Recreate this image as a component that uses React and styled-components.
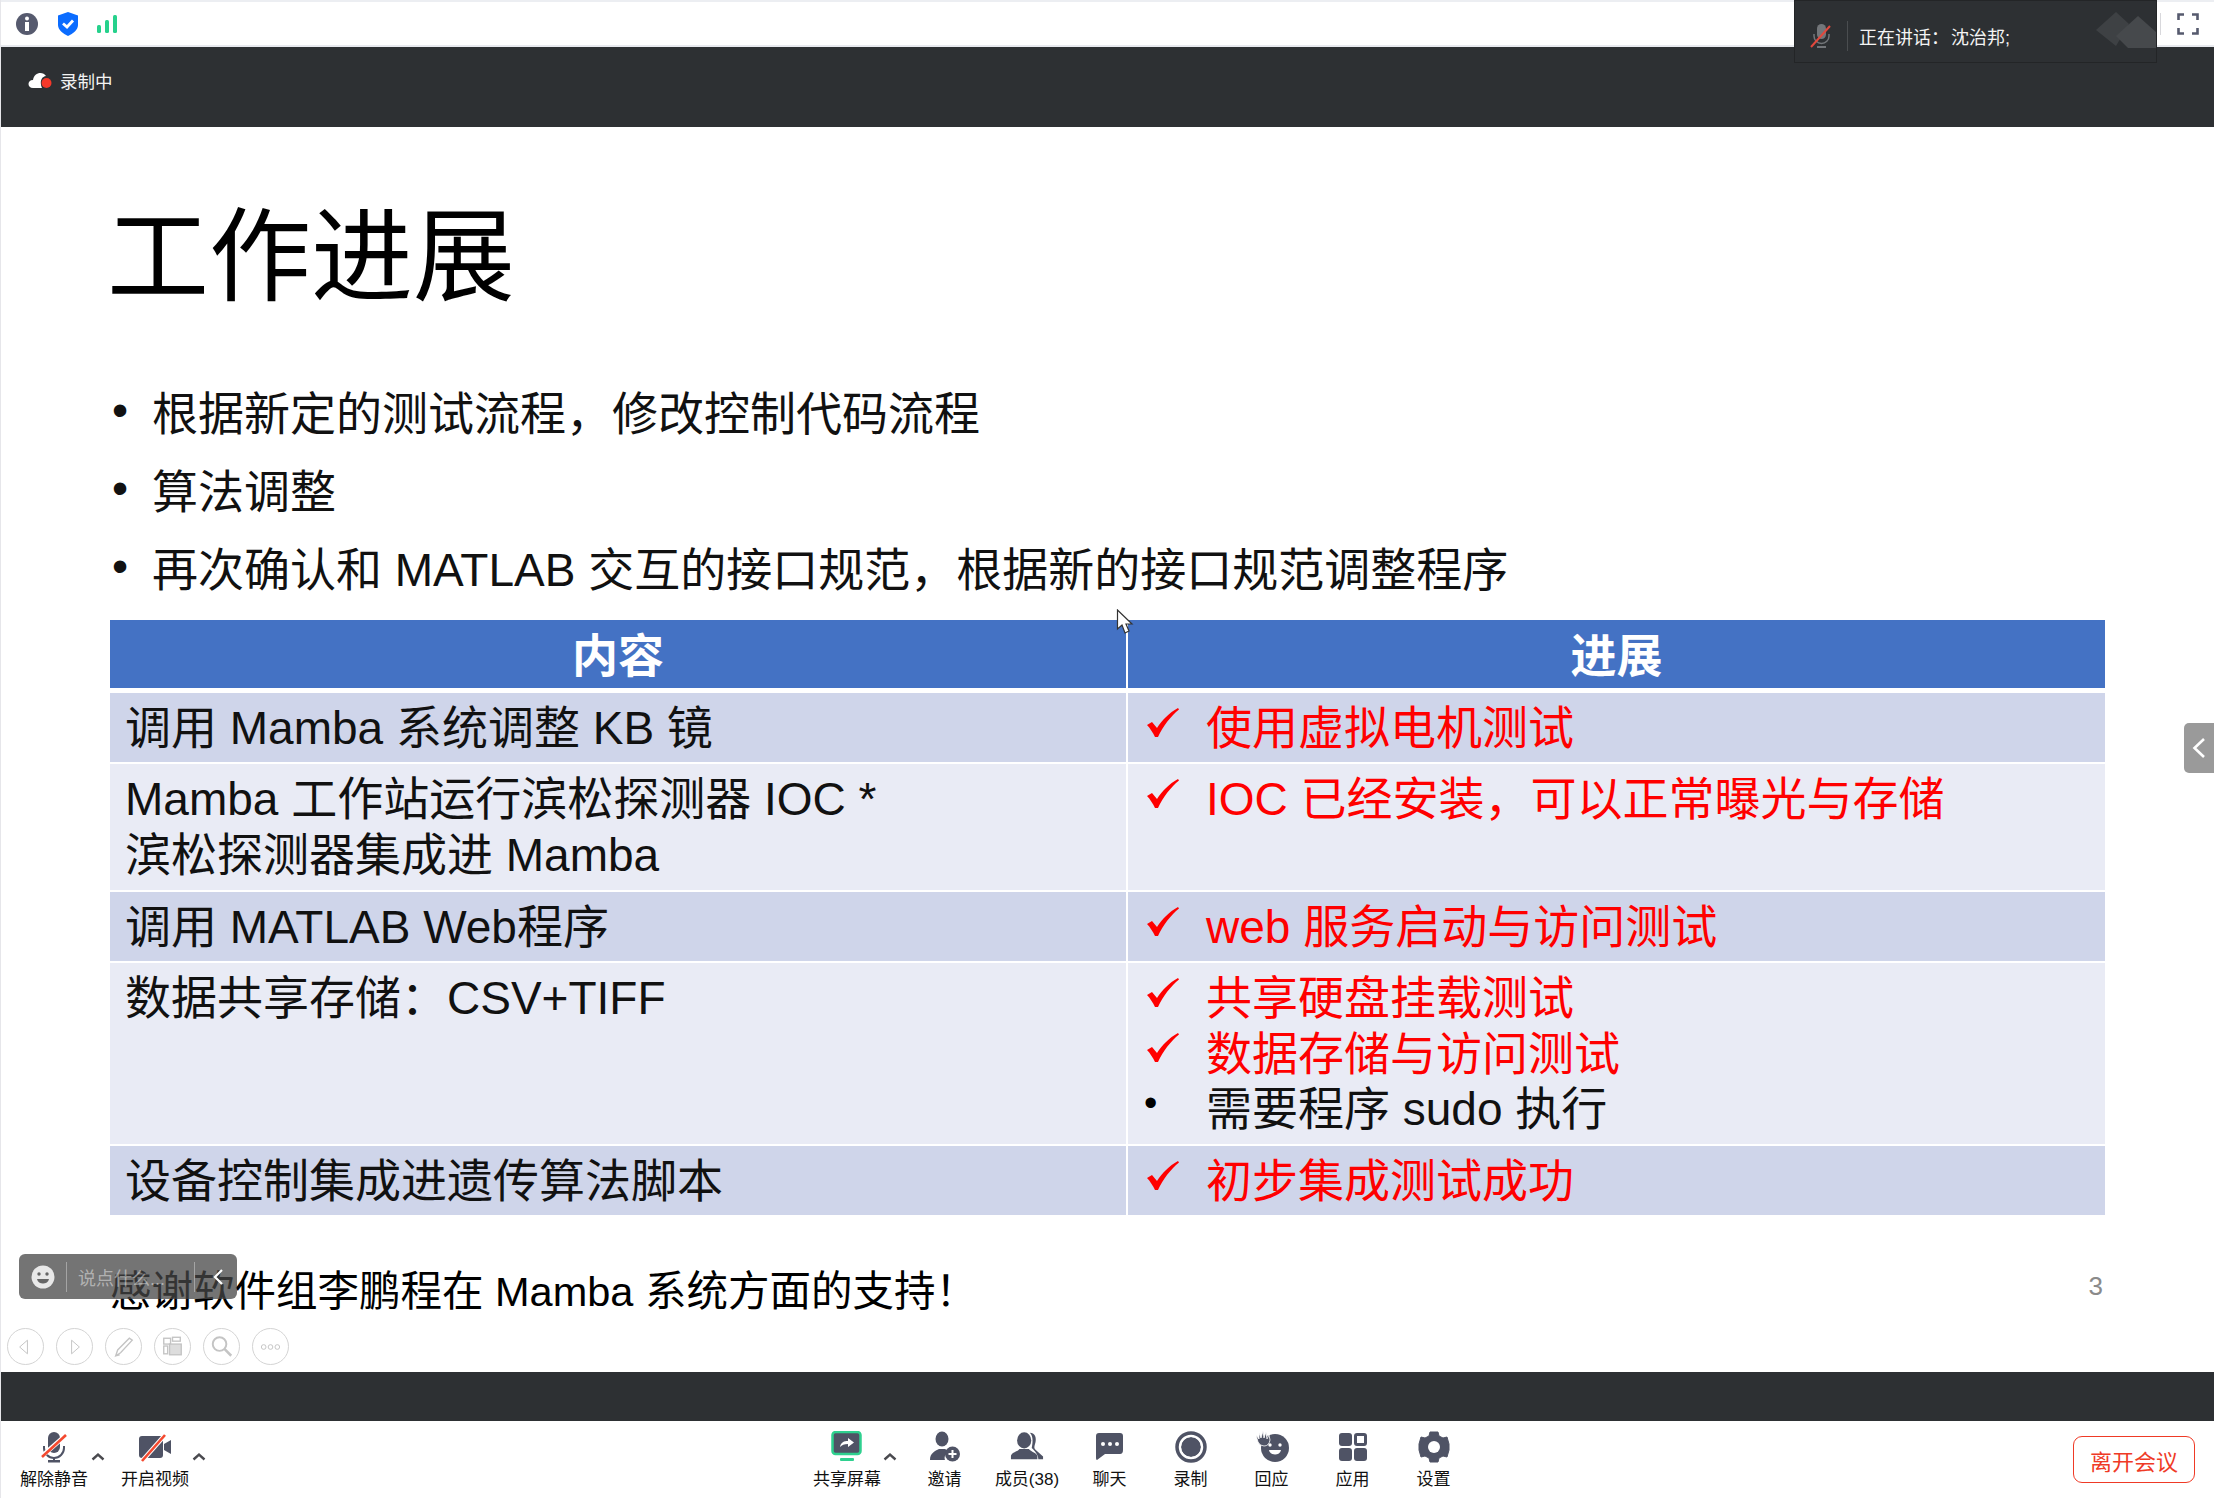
import React from 'react';
import styled, { createGlobalStyle } from 'styled-components';

const Global = createGlobalStyle`
  html, body { margin: 0; padding: 0; background: #fff; }
  body { font-family: "Liberation Sans", "Noto Sans CJK SC", sans-serif; }
`;
const Page = styled.div`
  position: relative; width: 2214px; height: 1498px; overflow: hidden;
  display: flex; flex-direction: column; background: #fff; border-left: 1px solid #e6e6ea; box-sizing: border-box;
`;
const TopBar = styled.div`
  height: 47px; box-sizing: border-box; flex: none; display: flex; align-items: center; gap: 18px; padding: 0 0 0 14px;
  border-top: 2px solid #eceef2; border-bottom: 2px solid #e8eaef; background: #fff;
`;
const FullscreenBox = styled.div`
  margin-left: auto; display: flex; align-items: center; padding-left: 16px; margin-right: 15px; height: 22px;
  border-left: 1px solid #d8d8dc;
`;
const RecBar = styled.div`
  height: 80px; flex: none; background: #2d3033; display: flex; align-items: center; padding-left: 27px; gap: 7px;
  color: #f2f2f2; font-size: 17.5px; padding-bottom: 14px; box-sizing: border-box; 
`;
const Talker = styled.div`
  position: absolute; left: 1793px; top: 0; width: 363px; height: 63px; box-sizing: border-box; background: #2d3033;
  border: 1px solid #232527; border-top: none; box-shadow: inset 0 10px 0 -9px #232527; display: flex; align-items: center;
  padding: 10px 0 0 15px; color: #f4f4f4; font-size: 18px; overflow: hidden;
`;
const TalkerSep = styled.div`width: 1px; height: 30px; background: #4a4d50; margin: 0 11px 0 15px;`;
const TalkerName = styled.span`margin-left: 2px;`;
const TalkerLogo = styled.svg`position: absolute; right: 0; top: 12px;`;

const Slide = styled.main`
  flex: none; height: 1245px; box-sizing: border-box; padding: 71px 109px 0 109px; background: #fff; color: #000;
  display: flex; flex-direction: column;
`;
const Title = styled.h1`margin: 0 0 0 -3px; font-size: 102px; line-height: 120px; font-weight: 400; height: 120px;`;
const Bullets = styled.ul`margin: 53px 0 15px; padding: 0; list-style: none;`;
const BulletItem = styled.li`
  height: 78px; display: flex; align-items: center; font-size: 46px; color: #111;
  &::before { content: "•"; width: 42px; padding-left: 2px; box-sizing: border-box; font-family: "Liberation Sans"; }
`;
const Table = styled.div`display: grid; grid-template-columns: 1016px 1fr; column-gap: 2px; font-size: 46px; line-height: 55.5px; color: #111;`;
const Head = styled.div`
  background: #4472c4; color: #fff; font-weight: 700; text-align: center; height: 68px; line-height: 72px; margin-bottom: 5px;
`;
const Cell = styled.div`
  background: ${p => (p.$dark ? '#cfd5ea' : '#e9ebf5')}; height: ${p => p.$h}px; margin-bottom: 2px; box-sizing: border-box;
  padding: 8px 0 0 ${p => (p.$right ? 19 : 15)}px;
`;
const Line = styled.div`display: flex; align-items: center; color: ${p => (p.$red ? '#ff0000' : '#111')};`;
const Mark = styled.span`
  width: ${p => (p.$dot ? 62 : 59)}px; margin-left: ${p => (p.$dot ? -3 : 0)}px; flex: none; display: flex; align-items: center; height: 55px;
  font-size: 38px; color: #000; box-sizing: border-box; position: relative; top: -6px;
`;
const Footer = styled.div`display: flex; justify-content: space-between; align-items: center; margin-top: 48px; font-size: 41.5px; line-height: 54px;`;
const PageNo = styled.span`font-size: 26px; color: #8a8a8a; margin: -12px 2px 0 0;`;

const Band = styled.div`height: 49px; flex: none; background: #2d3033;`;
const Toolbar = styled.footer`flex: 1; display: flex; align-items: flex-start; padding-left: 15px; background: #fff;`;
const ToolGroup = styled.div`display: flex; margin-left: ${p => p.$ml || 0}px;`;
const Tool = styled.div`
  width: ${p => p.$w}px; display: flex; flex-direction: column; align-items: center; padding-top: 9px; color: #111; font-size: 17px; line-height: 22px;
  white-space: nowrap;
`;
const ToolIcon = styled.div`height: 34px; width: 34px; display: flex; align-items: center; justify-content: center; margin-bottom: 5px;`;
const Caret = styled.div`width: ${p => p.$w}px; padding-top: 26px; flex: none; margin-left: ${p => p.$ml || 0}px;`;
const Leave = styled.div`
  margin: 15px 19px 0 auto; width: 122px; height: 47px; box-sizing: border-box; border: 1.5px solid #ef3a26; border-radius: 9px; color: #ef3a26;
  font-size: 22px; display: flex; align-items: center; justify-content: center;
`;

const Chat = styled.div`
  position: absolute; left: 18px; top: 1254px; width: 218px; height: 45px; border-radius: 6px; background: rgba(70,70,70,.75);
  display: flex; align-items: center; padding-left: 12px; box-sizing: border-box; color: rgba(255,255,255,.45); font-size: 18px;
`;
const ChatSep = styled.div`width: 1px; height: 30px; background: rgba(255,255,255,.35); flex: none; margin: ${p => p.$m};`;
const ChatHint = styled.span`white-space: nowrap; width: 116px; overflow: hidden;`;
const ChatChevron = styled.svg`margin-left: 16px;`;
const NavRow = styled.div`position: absolute; left: 6px; top: 1328px; display: flex; gap: 12px;`;
const NavBtn = styled.div`
  width: 37px; height: 37px; border-radius: 50%; box-sizing: border-box; border: 1px solid #d4d4d4; display: flex; align-items: center; justify-content: center;
`;
const Cursor = styled.svg`position: absolute; left: 1115px; top: 609px;`;
const SideTab = styled.div`
  position: absolute; right: 0; top: 723px; width: 30px; height: 50px; background: #9a9a9a; border-radius: 5px 0 0 5px;
  display: flex; align-items: center; justify-content: center;
`;

const G = '#4f5365';
const COMMA = '\uFF0C';
const COLON = '\uFF1A';
const BANG = '\uFF01';
const Check = () => (
  <svg width="32" height="30" viewBox="0 0 32 30"><path fill="#f00" d="M0 17 L5 14 L10 20 C15 12 22 5 31 0 L32 1.500 C24 8 16 18 11 29 L8 29 C6 25 3 20 0 17Z" /></svg>
);
const TickLine = ({ children }) => (<Line $red><Mark><Check /></Mark>{children}</Line>);
const UpCaret = () => (<svg width="14" height="9" viewBox="0 0 14 9"><path d="M1.500 7.500 L7 2.500 L12.500 7.500" fill="none" stroke="#4a4a4f" strokeWidth="2.400" /></svg>);

const Icons = {
  mic: (<svg width="32" height="32" viewBox="0 0 32 32"><rect x="10" y="1" width="12" height="21" rx="6" fill={G} /><path d="M6 15v2a10 10 0 0 0 20 0v-2" fill="none" stroke={G} strokeWidth="2" /><rect x="15" y="26" width="2" height="4" fill={G} /><rect x="10" y="29" width="12" height="2.500" fill={G} /><path d="M3 26 L28 4" stroke="#fff" strokeWidth="4.500" /><path d="M4 26 L28 4" stroke="#f4492f" strokeWidth="2.600" /></svg>),
  video: (<svg width="34" height="32" viewBox="0 0 34 32"><rect x="1" y="5" width="24" height="22" rx="3" fill={G} /><path d="M26 13 L33 9 V23 L26 19Z" fill={G} /><path d="M4 30 L27 4" stroke="#fff" strokeWidth="4.500" /><path d="M4 30 L27 4" stroke="#f4492f" strokeWidth="2.600" /></svg>),
  share: (<svg width="32" height="32" viewBox="0 0 32 32"><rect x="1.500" y="1" width="28" height="22" rx="3" fill={G} stroke="#2fd08f" strokeWidth="2.500" /><rect x="9" y="27" width="14" height="3" rx="1" fill="#2fd08f" /><path d="M9 16 C10 11 13 10 17 10 V7 L23 11.500 L17 16 V13 C13 13 11 14 9 16Z" fill="#fff" /></svg>),
  invite: (<svg width="32" height="32" viewBox="0 0 32 32"><ellipse cx="13" cy="8" rx="6.500" ry="7.500" fill={G} /><path d="M1 29 C1 22 6 20 10 18 H16 C18 19 19 20 20 20 C16 23 15 26 16 29Z" fill={G} /><circle cx="23.500" cy="23" r="7.500" fill={G} /><path d="M19.500 23h8M23.500 19v8" stroke="#fff" strokeWidth="2" /></svg>),
  people: (<svg width="36" height="32" viewBox="0 0 36 32"><path d="M21 1 C27 1 28 7 27 11 C26 15 25 17 27 19 L35 26 V29 H30 C30 24 26 20 23 17 C24 12 25 5 21 1Z" fill={G} /><ellipse cx="15" cy="9" rx="7.500" ry="8.500" fill={G} /><path d="M1 29 V26 C1 22 8 21 10 18 H20 C22 21 29 22 29 26 V29Z" fill={G} /></svg>),
  chat: (<svg width="30" height="30" viewBox="0 0 30 30"><path d="M4 1 H25 Q28 1 28 4 V18 Q28 22 25 22 H10 L2 28 Q1 28 1 26 V4 Q1 1 4 1Z" fill={G} /><circle cx="8" cy="12" r="2" fill="#fff" /><circle cx="15" cy="12" r="2" fill="#fff" /><circle cx="22" cy="12" r="2" fill="#fff" /></svg>),
  rec: (<svg width="32" height="32" viewBox="0 0 32 32"><circle cx="16" cy="16" r="14" fill="none" stroke={G} strokeWidth="3.500" /><circle cx="16" cy="16" r="10" fill={G} /><circle cx="16" cy="16" r="10.500" fill="none" stroke="#fff" strokeWidth="1" /></svg>),
  react: (<svg width="34" height="32" viewBox="0 0 34 32"><circle cx="20" cy="17" r="14" fill={G} /><path d="M1 4 L3 11 Q5 15 9 15 Q14 15 15 9 L14 4 L12 8 L11 1 L9 7 L8 0 L6 7 L4 2 L4 8Z" fill={G} stroke="#fff" strokeWidth=".8" /><circle cx="15" cy="14" r="1.700" fill="#fff" /><circle cx="25" cy="14" r="1.700" fill="#fff" /><path d="M14 19 H26 C25 25 15 25 14 19Z" fill="#fff" /></svg>),
  apps: (<svg width="30" height="30" viewBox="0 0 30 30"><rect x="1" y="1" width="13" height="13" rx="3" fill={G} /><rect x="1" y="16" width="13" height="13" rx="3" fill={G} /><rect x="16" y="16" width="13" height="13" rx="3" fill={G} /><rect x="17.500" y="2.500" width="10" height="10" rx="1.500" fill="#fff" stroke={G} strokeWidth="3" /></svg>),
  gear: (<svg width="32" height="32" viewBox="0 0 32 32"><path fill={G} d="M12 1 H20 L21 5 L25 7 L29 6 L31 13 V19 L29 26 L25 25 L21 27 L20 31 H12 L11 27 L7 25 L3 26 L1 19 V13 L3 6 L7 7 L11 5Z" strokeLinejoin="round" stroke={G} strokeWidth="1" /><circle cx="16" cy="16" r="6" fill="#fff" /></svg>),
};

const NavGlyphs = [
  <path d="M20 11 L12 18 L20 25Z" fill="none" stroke="#c4c4c4" />,
  <path d="M15 11 L23 18 L15 25Z" fill="none" stroke="#c4c4c4" />,
  <path d="M10 27 L12 21 L24 9 L27 11 L15 24Z M10 27 L14 26" fill="none" stroke="#c4c4c4" strokeWidth="1.400" />,
  <g fill="none" stroke="#c4c4c4" strokeWidth="1.400"><rect x="9" y="9" width="7" height="6" /><rect x="18" y="8" width="8" height="4" /><rect x="9" y="17" width="4" height="8" /><rect x="15" y="15" width="12" height="11" fill="#ddd" /></g>,
  <g fill="none" stroke="#c4c4c4" strokeWidth="2"><circle cx="16" cy="15" r="7" /><path d="M21 20 L28 27" strokeWidth="2.600" /></g>,
  <g fill="none" stroke="#c4c4c4"><circle cx="11" cy="18" r="2.400" /><circle cx="18" cy="18" r="2.400" /><circle cx="25" cy="18" r="2.400" /></g>,
];

export default function App() {
  return (
    <Page>
      <Global />
      <TopBar>
        <svg width="24" height="24" viewBox="0 0 24 24"><circle cx="12" cy="12" r="11" fill="#565a6e" /><circle cx="12" cy="6.500" r="2" fill="#fff" /><rect x="10" y="10" width="4" height="9" fill="#fff" /></svg>
        <svg width="22" height="24" viewBox="0 0 22 24"><path d="M11 0 L21 3.500 V13 C21 18 16 21.500 11 24 C6 21.500 1 18 1 13 V3.500Z" fill="#0b6cff" /><path d="M6 11.500 L10 15 L16 8.500" fill="none" stroke="#fff" strokeWidth="2.800" /></svg>
        <svg width="20" height="20" viewBox="0 0 20 20"><rect x="0" y="11" width="4" height="8" rx="1.500" fill="#26d18c" /><rect x="8" y="6" width="4" height="13" rx="1.500" fill="#26d18c" /><rect x="16" y="1" width="4" height="18" rx="1.500" fill="#26d18c" /></svg>
        <FullscreenBox>
          <svg width="22" height="22" viewBox="0 0 22 22"><path d="M1.500 7 V1.500 H7 M15 1.500 H20.500 V7 M20.500 15 V20.500 H15 M7 20.500 H1.500 V15" fill="none" stroke="#565a6e" strokeWidth="2.600" /></svg>
        </FullscreenBox>
      </TopBar>
      <RecBar>
        <svg width="25" height="20" viewBox="0 0 25 20"><path d="M5 18 C-1 18 -1 10 5 10 C6 2 15 1 18 6 C12 7 12 14 14 18Z" fill="#fff" /><circle cx="18.500" cy="13" r="5" fill="#f5382a" /></svg>
        录制中
      </RecBar>
      <Talker>
        <svg width="22" height="26" viewBox="0 0 22 26"><rect x="7" y="1" width="9" height="15" rx="4.500" fill="#73767a" /><path d="M4 11 v2 a7.500 7.500 0 0 0 15 0 v-2" fill="none" stroke="#73767a" strokeWidth="1.500" /><rect x="7" y="23" width="9" height="2" fill="#73767a" /><path d="M1 24 L20 3" stroke="#e2483d" strokeWidth="2" /></svg>
        <TalkerSep />
        {'正在讲话' + COLON}<TalkerName>沈治邦;</TalkerName>
        <TalkerLogo width="60" height="36" viewBox="0 0 60 36"><path d="M0 18 L20 0 L33 12 L20 34 Z" fill="#3e4144" /><path d="M20 24 L42 4 L60 20 V36 H32Z" fill="#46494c" /></TalkerLogo>
      </Talker>
      <Slide>
        <Title>工作进展</Title>
        <Bullets>
          <BulletItem>{'根据新定的测试流程' + COMMA + '修改控制代码流程'}</BulletItem>
          <BulletItem>算法调整</BulletItem>
          <BulletItem>{'再次确认和 MATLAB 交互的接口规范' + COMMA + '根据新的接口规范调整程序'}</BulletItem>
        </Bullets>
        <Table>
          <Head>内容</Head>
          <Head>进展</Head>
          <Cell $dark $h={69}>调用 Mamba 系统调整 KB 镜</Cell>
          <Cell $dark $right $h={69}><TickLine>使用虚拟电机测试</TickLine></Cell>
          <Cell $h={126}>Mamba 工作站运行滨松探测器 IOC *<br />滨松探测器集成进 Mamba</Cell>
          <Cell $right $h={126}><TickLine>{'IOC 已经安装' + COMMA + '可以正常曝光与存储'}</TickLine></Cell>
          <Cell $dark $h={69}>调用 MATLAB Web程序</Cell>
          <Cell $dark $right $h={69}><TickLine>web 服务启动与访问测试</TickLine></Cell>
          <Cell $h={181}>{'数据共享存储' + COLON + 'CSV+TIFF'}</Cell>
          <Cell $right $h={181}>
            <TickLine>共享硬盘挂载测试</TickLine>
            <TickLine>数据存储与访问测试</TickLine>
            <Line><Mark $dot>•</Mark>需要程序 sudo 执行</Line>
          </Cell>
          <Cell $dark $h={69}>设备控制集成进遗传算法脚本</Cell>
          <Cell $dark $right $h={69}><TickLine>初步集成测试成功</TickLine></Cell>
        </Table>
        <Footer>
          <span>{'感谢软件组李鹏程在 Mamba 系统方面的支持' + BANG}</span>
          <PageNo>3</PageNo>
        </Footer>
      </Slide>
      <Band />
      <Toolbar>
        <ToolGroup>
          <Tool $w={76}><ToolIcon>{Icons.mic}</ToolIcon>解除静音</Tool>
          <Caret $w={26} $ml={-1}><UpCaret /></Caret>
          <Tool $w={76}><ToolIcon>{Icons.video}</ToolIcon>开启视频</Tool>
          <Caret $w={26} $ml={-1}><UpCaret /></Caret>
        </ToolGroup>
        <ToolGroup $ml={593}>
          <Tool $w={72}><ToolIcon>{Icons.share}</ToolIcon>共享屏幕</Tool>
          <Caret $w={21}><UpCaret /></Caret>
          <Tool $w={81}><ToolIcon>{Icons.invite}</ToolIcon>邀请</Tool>
          <Tool $w={84}><ToolIcon>{Icons.people}</ToolIcon>成员(38)</Tool>
          <Tool $w={81}><ToolIcon>{Icons.chat}</ToolIcon>聊天</Tool>
          <Tool $w={81}><ToolIcon>{Icons.rec}</ToolIcon>录制</Tool>
          <Tool $w={81}><ToolIcon>{Icons.react}</ToolIcon>回应</Tool>
          <Tool $w={81}><ToolIcon>{Icons.apps}</ToolIcon>应用</Tool>
          <Tool $w={81}><ToolIcon>{Icons.gear}</ToolIcon>设置</Tool>
        </ToolGroup>
        <Leave>离开会议</Leave>
      </Toolbar>
      <Chat>
        <svg width="24" height="24" viewBox="0 0 24 24"><circle cx="12" cy="12" r="11.500" fill="#e8e8e8" /><circle cx="8" cy="9" r="1.700" fill="#666" /><circle cx="16" cy="9" r="1.700" fill="#666" /><path d="M6 14 H18 C17 20 7 20 6 14Z" fill="#666" /></svg>
        <ChatSep $m="0 11px 0 11px" />
        <ChatHint>说点什么...</ChatHint>
        <ChatSep $m="0" />
        <ChatChevron width="14" height="20" viewBox="0 0 14 20"><path d="M11 3 L4 10 L11 17" fill="none" stroke="#fff" strokeWidth="2.200" /></ChatChevron>
      </Chat>
      <NavRow>
        {NavGlyphs.map((g, i) => (
          <NavBtn key={i}><svg width="36" height="36" viewBox="0 0 36 36">{g}</svg></NavBtn>
        ))}
      </NavRow>
      <Cursor width="20" height="28" viewBox="0 0 20 28"><path d="M1.500 1 V20 L6 16 L9 24 L13 22 L10 15 L16 15Z" fill="#fff" stroke="#333" strokeWidth="1.200" /></Cursor>
      <SideTab><svg width="16" height="24" viewBox="0 0 16 24"><path d="M13 3 L3.500 12 L13 21" fill="none" stroke="#fff" strokeWidth="2.600" /></svg></SideTab>
    </Page>
  );
}
